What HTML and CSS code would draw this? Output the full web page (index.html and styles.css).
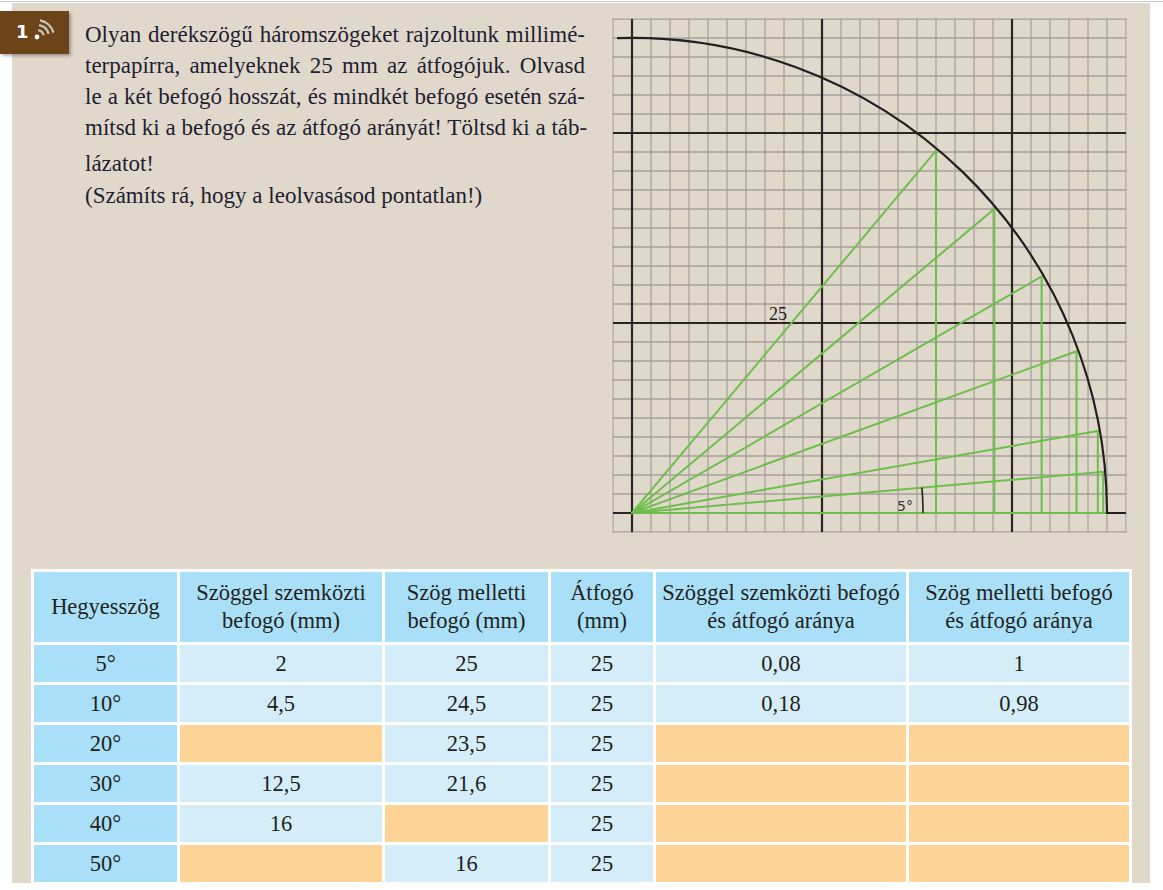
FILE: index.html
```html
<!DOCTYPE html>
<html lang="hu">
<head>
<meta charset="utf-8">
<title>Feladat</title>
<link rel="stylesheet" href="styles.css">
</head>
<body>
<div class="topline"></div>
<div class="panel">
  <div class="badge">
    <span class="num">1</span>
    <svg class="signal" width="26" height="28" viewBox="0 0 26 28">
      <circle cx="4" cy="24" r="2.4" fill="#ffffff"/>
      <path d="M5.2 17.1 A7 7 0 0 1 10.8 22.2" fill="none" stroke="#cbc5bf" stroke-width="2.2"/>
      <path d="M6.1 12.2 A12 12 0 0 1 15.6 20.9" fill="none" stroke="#cbc5bf" stroke-width="2.2"/>
      <path d="M7 7.3 A17 17 0 0 1 20.4 19.6" fill="none" stroke="#cbc5bf" stroke-width="2.2"/>
    </svg>
  </div>
  <div class="top">
    <div class="task">
      <div class="ln just">Olyan derékszögű háromszögeket rajzoltunk millimé-</div>
      <div class="ln just">terpapírra, amelyeknek 25 mm az átfogójuk. Olvasd</div>
      <div class="ln just">le a két befogó hosszát, és mindkét befogó esetén szá-</div>
      <div class="ln just">mítsd ki a befogó és az átfogó arányát! Töltsd ki a táb-</div>
      <div class="ln ln5">lázatot!</div>
      <div class="ln ln6">(Számíts rá, hogy a leolvasásod pontatlan!)</div>
    </div>
    <svg class="graph" width="516" height="516" viewBox="0 0 516 516">
      <defs>
        <pattern id="grid" width="19" height="19" patternUnits="userSpaceOnUse">
          <path d="M0 1 H19 M1 0 V19" fill="none" stroke="#a6a19c" stroke-width="1.3"/>
        </pattern>
      </defs>
      <rect x="0.35" y="0.35" width="514.3" height="514.3" fill="url(#grid)"/>
      <g stroke="#2a2624" stroke-width="2.2" fill="none">
        <path d="M20 1 V514 M210 1 V514 M400 1 V514"/>
        <path d="M1 115 H514 M1 305 H514 M1 495 H514"/>
      </g>
      <g stroke="#6cbf4a" stroke-width="2" fill="none" stroke-linecap="round">
        <path d="M20 495 H495"/>
        <path d="M20 495 L491.2 453.8 V495"/>
        <path d="M20 495 L485.8 412.9 V495"/>
        <path d="M20 495 L464.5 333.2 V495"/>
        <path d="M20 495 L429.6 258.5 V495"/>
        <path d="M20 495 L382.3 191 V495"/>
        <path d="M20 495 L324 132.7 V495"/>
      </g>
      <path d="M5.1 20.2 A475 475 0 0 1 495 495 L514 495" fill="none" stroke="#231f20" stroke-width="2.2"/>
      <path d="M311 495 A291 291 0 0 0 309.9 469.6" fill="none" stroke="#231f20" stroke-width="1.6"/>
      <text x="157" y="302" class="lbl25">25</text>
      <text x="285" y="493" class="lbl5">5°</text>
    </svg>
  </div>
  <table class="tbl">
    <colgroup>
      <col class="c1"><col class="c2"><col class="c3"><col class="c4"><col class="c5"><col class="c6">
    </colgroup>
    <thead>
      <tr class="head">
        <th>Hegyesszög</th>
        <th>Szöggel szemközti<br>befogó (mm)</th>
        <th>Szög melletti<br>befogó (mm)</th>
        <th>Átfogó<br>(mm)</th>
        <th>Szöggel szemközti befogó<br>és átfogó aránya</th>
        <th>Szög melletti befogó<br>és átfogó aránya</th>
      </tr>
    </thead>
    <tbody>
      <tr><th>5°</th><td>2</td><td>25</td><td>25</td><td>0,08</td><td>1</td></tr>
      <tr><th>10°</th><td>4,5</td><td>24,5</td><td>25</td><td>0,18</td><td>0,98</td></tr>
      <tr><th>20°</th><td class="fill"></td><td>23,5</td><td>25</td><td class="fill"></td><td class="fill"></td></tr>
      <tr><th>30°</th><td>12,5</td><td>21,6</td><td>25</td><td class="fill"></td><td class="fill"></td></tr>
      <tr><th>40°</th><td>16</td><td class="fill"></td><td>25</td><td class="fill"></td><td class="fill"></td></tr>
      <tr><th>50°</th><td class="fill"></td><td>16</td><td>25</td><td class="fill"></td><td class="fill"></td></tr>
    </tbody>
  </table>
</div>
</body>
</html>
```

FILE: styles.css
```css
html, body {
  margin: 0;
  padding: 0;
  background: #ffffff;
}
body {
  font-family: "Liberation Serif", "Times New Roman", serif;
  color: #231f20;
}
.topline {
  height: 1px;
  margin-top: 1px;
  background: #c9c9c9;
}
.panel {
  position: relative;
  margin-left: 12px;
  margin-top: 1px;
  width: 1138px;
  height: 880px;
  padding-top: 15px;
  box-sizing: border-box;
  background: #e1d8cc;
}
.badge {
  position: absolute;
  left: -12px;
  top: 8px;
  width: 69px;
  height: 43px;
  background: #6d4419;
  box-shadow: 2px 2px 3px rgba(0, 0, 0, 0.3);
}
.badge .num {
  position: absolute;
  left: 16px;
  top: 10px;
  font-family: "DejaVu Sans", sans-serif;
  font-weight: bold;
  font-size: 18px;
  line-height: 22px;
  color: #ffffff;
}
.badge .signal {
  position: absolute;
  left: 33px;
  top: 2px;
}
.top {
  display: flex;
  align-items: flex-start;
}
.task {
  margin-left: 73px;
  margin-top: 1px;
  width: 500px;
  font-family: "Liberation Serif", "Times New Roman", serif;
  font-size: 23px;
  line-height: 31px;
  color: #1f1e30;
}
.ln {
  white-space: nowrap;
}
.just {
  text-align: justify;
  text-align-last: justify;
}
.ln5 {
  margin-top: 5px;
}
.ln6 {
  margin-top: 1px;
}
.graph {
  display: block;
  margin-left: 27px;
  margin-top: 0;
}
.lbl25 {
  font-family: "Liberation Serif", serif;
  font-size: 18px;
  fill: #231f20;
}
.lbl5 {
  font-family: "DejaVu Sans", sans-serif;
  font-size: 14px;
  fill: #3a3a3a;
}
.tbl {
  margin-top: 35px;
  margin-left: 19px;
  border-collapse: separate;
  border-spacing: 3px;
  background: #ffffff;
  table-layout: fixed;
  width: 1101px;
  font-family: "Liberation Serif", "Times New Roman", serif;
  font-size: 22.5px;
}
.c1 { width: 143px; }
.c2 { width: 202px; }
.c3 { width: 163px; }
.c4 { width: 102px; }
.c5 { width: 250px; }
.c6 { width: 220px; }
.tbl th, .tbl td {
  padding: 0;
  text-align: center;
  font-weight: normal;
  height: 37px;
  line-height: 28px;
}
.tbl th {
  background: #aadff8;
}
.tbl td {
  background: #d5edf9;
}
.tbl td.fill {
  background: #fdd396;
}
.tbl .head th {
  height: 70px;
}
```
